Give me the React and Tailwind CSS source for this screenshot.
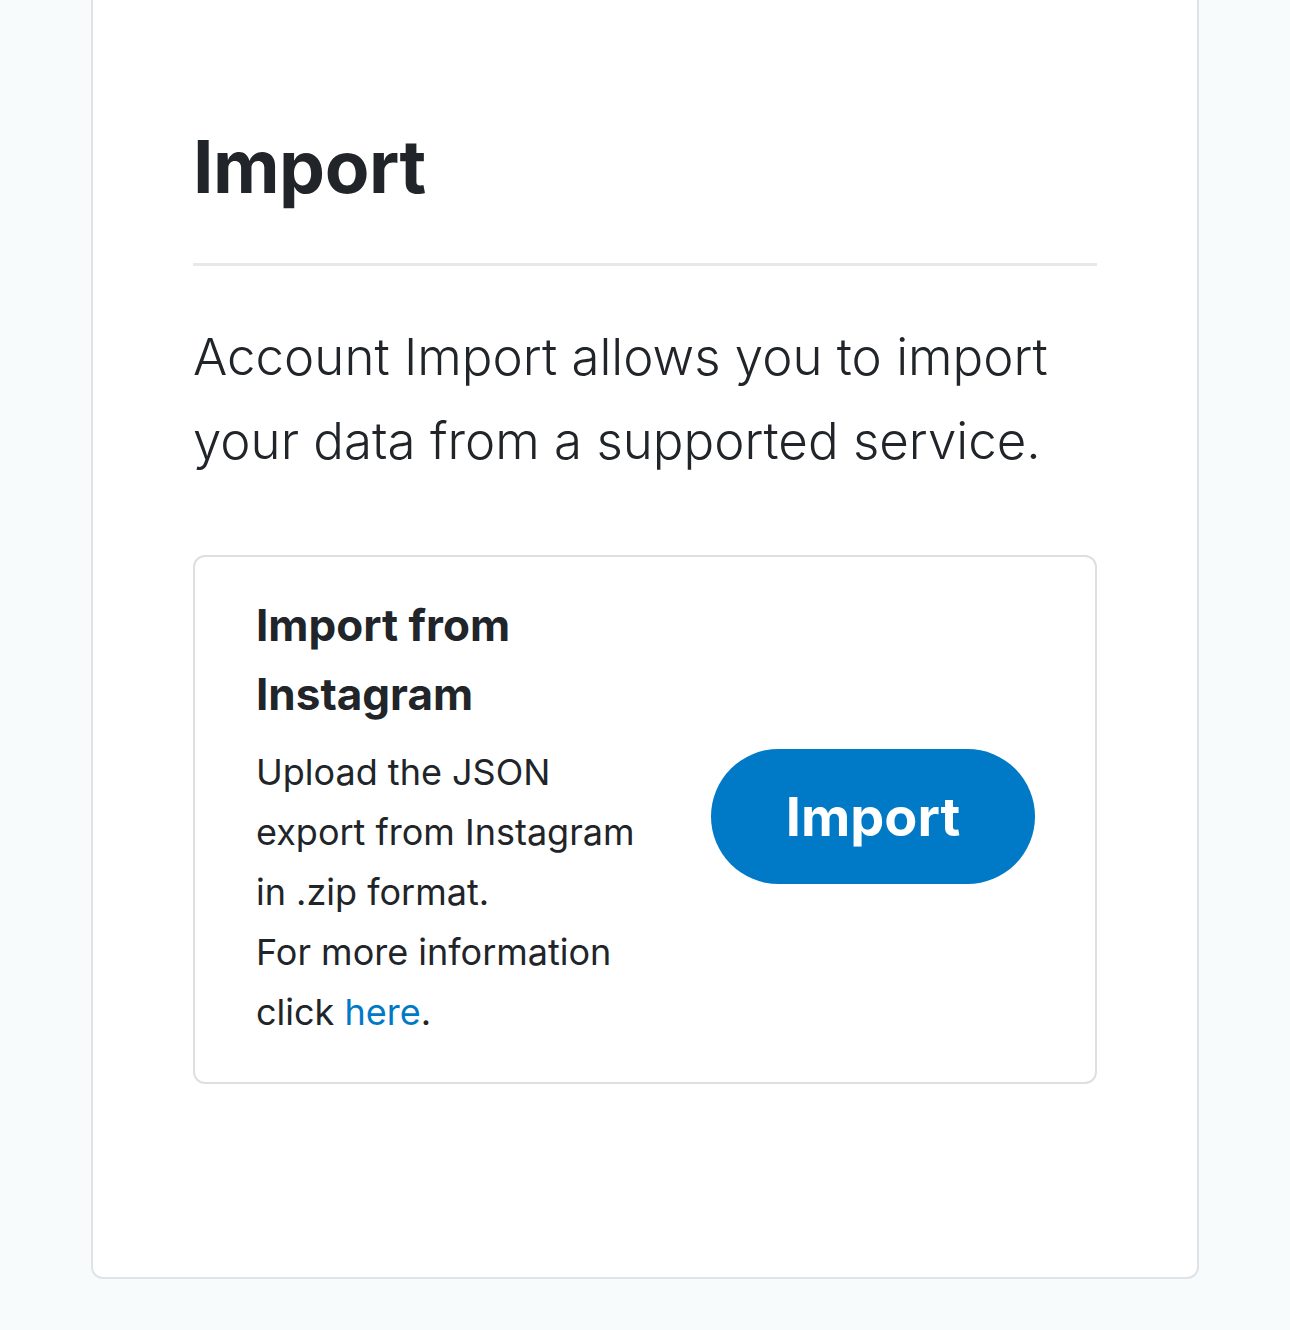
export default function App() {
  return (
    <div className="min-h-[1330px] bg-[#f8fbfc] px-[91px] pb-[54px]" style={{ fontFamily: 'Inter, "Noto Sans", sans-serif' }}>
      <div className="bg-white border-x-2 border-b-2 border-[#dde3e7] rounded-b-[12px] px-[100px] pt-[123px] pb-[193px]">
        <h1 className="text-[73px] leading-[1.2] font-bold text-[#212529] tracking-[-0.5px]">Import</h1>
        <div className="h-[3px] bg-[#e6e8ea] mt-[52px]" />
        <p className="mt-[49px] text-[51px] leading-[84px] font-light text-[#212529]">
          Account Import allows you to import your data from a supported service.
        </p>
        <div className="mt-[72px] border-2 border-[#dfdfdf] rounded-[12px] pl-[61px] pr-[60px] pt-[34px] pb-[40px] flex items-center gap-[50px]">
          <div className="flex-1 text-[#212529]">
            <h2 className="text-[44px] leading-[69px] font-bold">Import from Instagram</h2>
            <p className="text-[36px] leading-[60px] mt-[13px]">
              Upload the JSON export from Instagram in .zip format.
              <br />
              For more information click <a href="#" className="text-[#0079c6]">here</a>.
            </p>
          </div>
          <button className="shrink-0 w-[324px] h-[135px] rounded-full bg-[#0079c6] text-white text-[54px] font-bold">
            Import
          </button>
        </div>
      </div>
    </div>
  )
}
